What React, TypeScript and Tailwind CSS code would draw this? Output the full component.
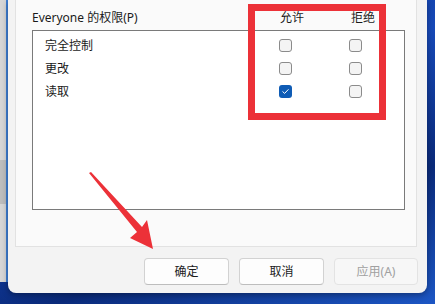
const rows = [
  { label: "完全控制", allow: false, deny: false },
  { label: "更改", allow: false, deny: false },
  { label: "读取", allow: true, deny: false },
];

function Check({ on }: { on: boolean }) {
  if (on) {
    return (
      <span className="flex size-[13px] items-center justify-center rounded-[3px] bg-[#0f5cb5]">
        <svg width="9" height="9" viewBox="0 0 9 9" fill="none">
          <path d="M1.8 4.7 3.6 6.4 7.2 2.6" stroke="#fff" strokeWidth="1" strokeLinecap="round" strokeLinejoin="round" />
        </svg>
      </span>
    );
  }
  return <span className="block size-[13px] rounded-[3px] border border-[#8b8b8b] bg-[#f4f4f4]" />;
}

function Button({ children, disabled }: { children: string; disabled?: boolean }) {
  return (
    <button
      className={
        disabled
          ? "flex h-[27px] w-[84px] items-center justify-center rounded-[4px] border border-[#e3e3e3] bg-[#f7f7f7] text-[12px] text-[#a0a0a0]"
          : "flex h-[27px] w-[85px] items-center justify-center rounded-[4px] border border-[#d2d2d2] border-b-[#bdbdbd] bg-[#fdfdfd] text-[12px] text-[#1b1b1b]"
      }
    >
      {children}
    </button>
  );
}

export default function App() {
  return (
    <div
      className="relative flex h-[304px] w-[435px] overflow-hidden bg-[linear-gradient(160deg,#0b2f8a_0%,#1749b8_40%,#0a2a7a_70%,#1c56c4_100%)]"
      style={{ fontFamily: '"Noto Sans", "Noto Sans CJK SC", sans-serif' }}
    >
      {/* window behind, on the left */}
      <div className="flex h-[282px] w-[8px] flex-col border-r-2 border-[#3f80d6] bg-[#d6d6d6]">
        <div className="h-[160px]" />
        <div className="h-[44px] bg-[#bdbdbd]" />
      </div>

      {/* dialog */}
      <div className="flex h-[293px] w-[419px] flex-col rounded-b-[8px] bg-[#f3f3f3] shadow-[0_2px_6px_rgba(0,0,0,0.35)]">
        <div className="ml-[7px] flex h-[247px] w-[402px] flex-col border-x border-b border-[#e2e2e2] bg-[#fafafa]">
          <div className="flex h-[30px] items-start pl-[16px] pt-[10px] text-[12px] leading-[16px] text-[#1a1a1a]">
            <span className="w-[240px]">Everyone 的权限(P)</span>
            <span className="w-[40px] text-center">允许</span>
            <span className="ml-[31px] w-[40px] text-center">拒绝</span>
          </div>
          <div className="ml-[16px] flex h-[180px] w-[373px] flex-col border border-[#7a7a7a] bg-white pt-[3px]">
            {rows.map((r) => (
              <div key={r.label} className="flex h-[23px] items-center pl-[12px] text-[12px] text-[#1a1a1a]">
                <span className="w-[220px]">{r.label}</span>
                <span className="flex w-[40px] justify-center">
                  <Check on={r.allow} />
                </span>
                <span className="ml-[30px] flex w-[40px] justify-center">
                  <Check on={r.deny} />
                </span>
              </div>
            ))}
          </div>
        </div>
        <div className="mt-[11px] flex justify-end gap-[10px] pr-[9px]">
          <Button>确定</Button>
          <Button>取消</Button>
          <Button disabled>应用(A)</Button>
        </div>
      </div>

      {/* annotation: red frame */}
      <div className="absolute left-[248px] top-[4px] h-[116px] w-[138px] border-[7px] border-[#ec3138]" />

      {/* annotation: arrow */}
      <svg className="absolute left-0 top-0" width="435" height="304" viewBox="0 0 435 304">
        <polygon
          points="89,173 91,172 142,227 147,220 153,249 130,238 137,232"
          fill="#ec3138"
        />
      </svg>
    </div>
  );
}
